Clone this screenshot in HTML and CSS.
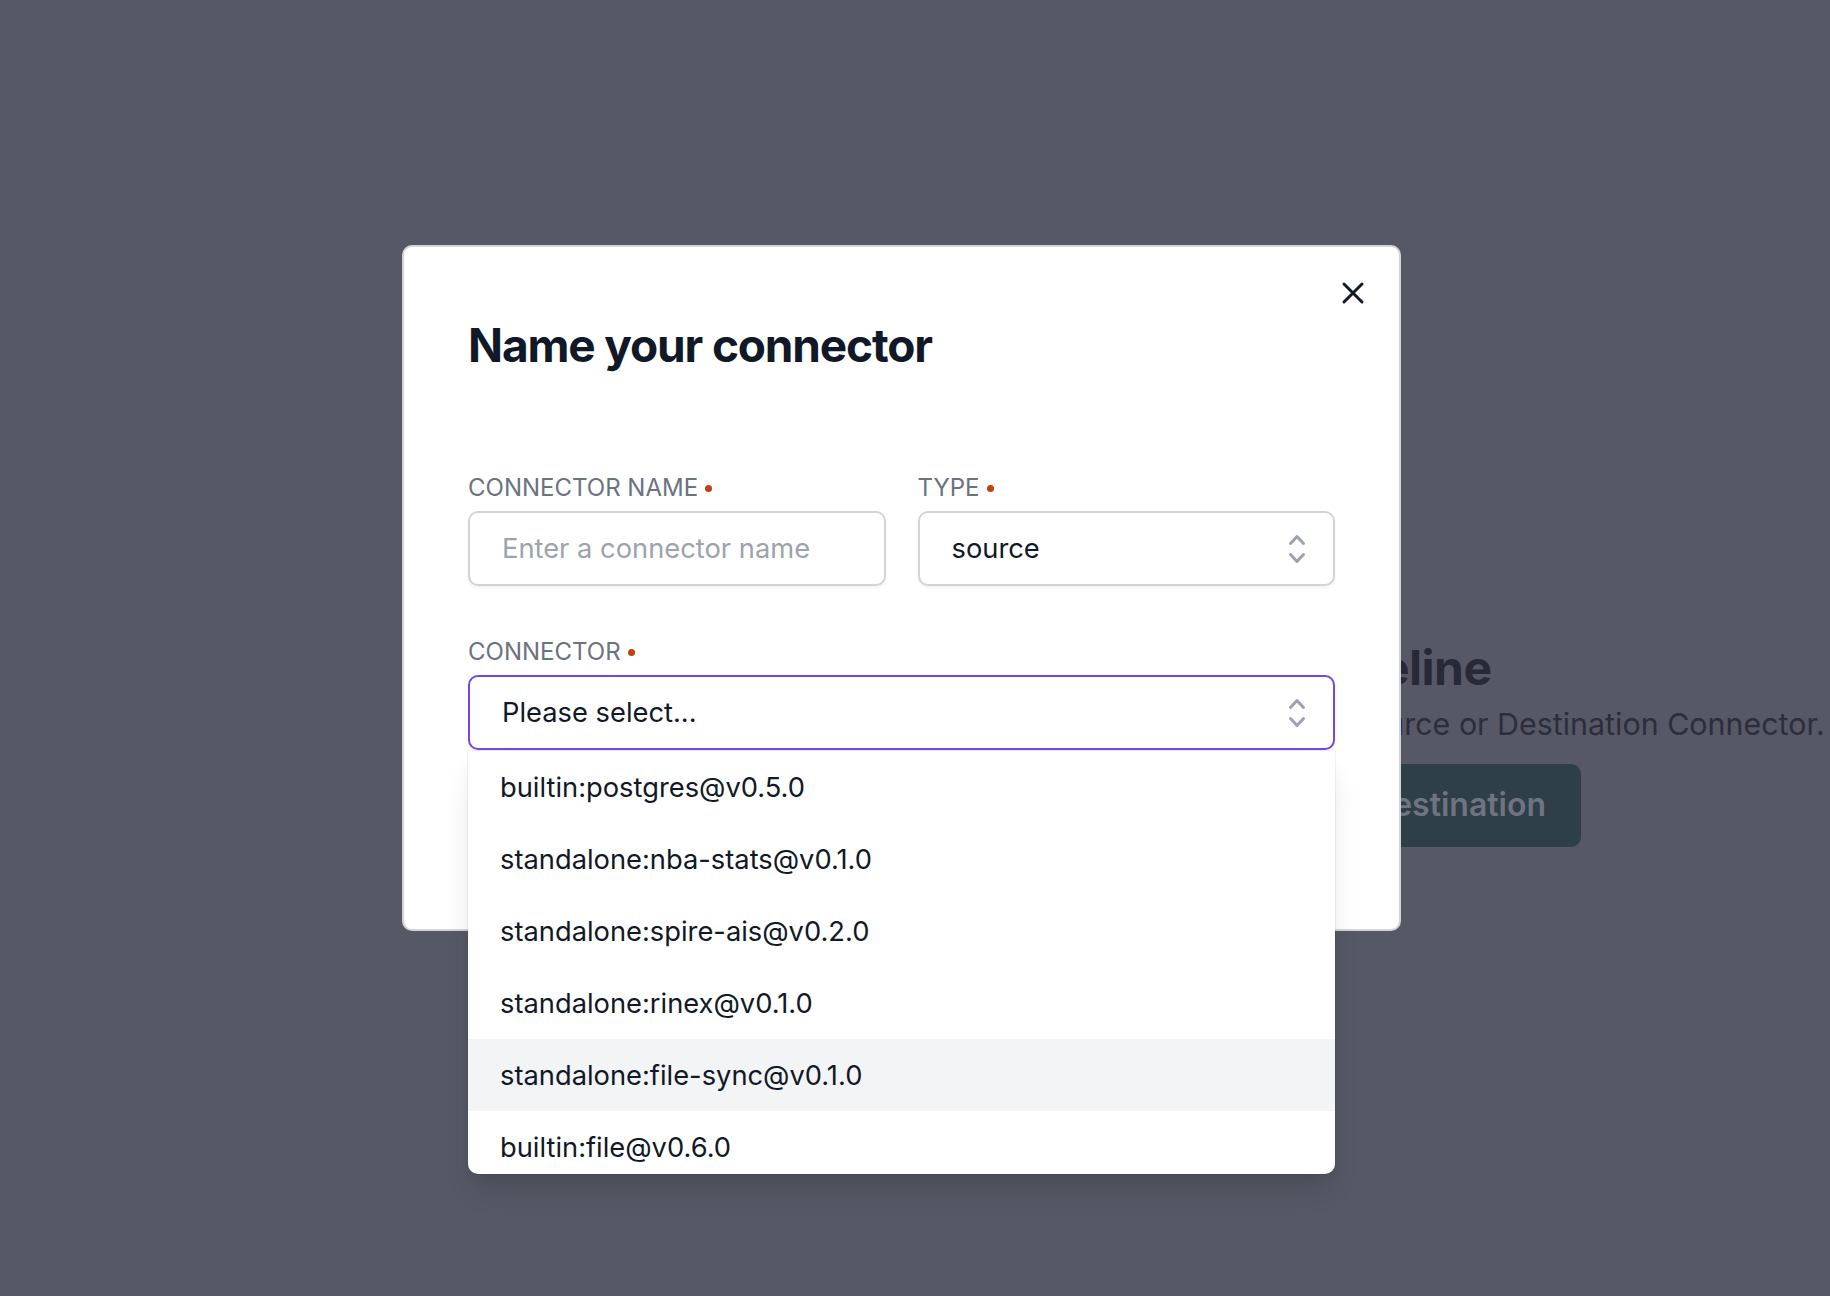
FILE: index.html
```html
<!DOCTYPE html>
<html lang="en">
<head>
<meta charset="utf-8">
<title>Name your connector</title>
<link rel="stylesheet" href="styles.css">
</head>
<body>
  <main class="page">
    <section class="empty">
      <h2 class="empty-title">Create a new pipeline</h2>
      <p class="empty-sub">Get started by making a Source or Destination Connector.</p>
      <div class="empty-actions">
        <button class="btn-dark" type="button">Add Source</button>
        <button class="btn-dark" type="button">Add Destination</button>
      </div>
    </section>
  </main>

  <div class="overlay">
    <div class="modal" role="dialog" aria-labelledby="modal-title">
      <button class="close" type="button" aria-label="Close">
        <svg viewBox="0 0 24 24" width="36" height="36" fill="none" stroke="#111827" stroke-width="2" stroke-linecap="round" stroke-linejoin="round"><path d="M6 18L18 6M6 6l12 12"/></svg>
      </button>
      <h1 class="title" id="modal-title">Name your connector</h1>

      <div class="form">
        <div class="row">
          <div class="field">
            <div class="label">Connector Name<span class="req"></span></div>
            <div class="input"><span class="placeholder">Enter a connector name</span></div>
          </div>
          <div class="field">
            <div class="label">Type<span class="req"></span></div>
            <div class="input select">
              <span>source</span>
              <svg class="chev" viewBox="0 0 20 20" width="40" height="40" fill="#9ca3af"><path fill-rule="evenodd" d="M10 3a.75.75 0 01.55.24l3.25 3.5a.75.75 0 11-1.1 1.02L10 4.852 7.3 7.76a.75.75 0 01-1.1-1.02l3.25-3.5A.75.75 0 0110 3zm-3.76 9.2a.75.75 0 011.06.04l2.7 2.908 2.7-2.908a.75.75 0 111.1 1.02l-3.25 3.5a.75.75 0 01-1.1 0l-3.25-3.5a.75.75 0 01.04-1.06z" clip-rule="evenodd"/></svg>
            </div>
          </div>
        </div>

        <div class="field combo">
          <div class="label">Connector<span class="req"></span></div>
          <div class="input select focus">
            <span>Please select...</span>
            <svg class="chev" viewBox="0 0 20 20" width="40" height="40" fill="#9ca3af"><path fill-rule="evenodd" d="M10 3a.75.75 0 01.55.24l3.25 3.5a.75.75 0 11-1.1 1.02L10 4.852 7.3 7.76a.75.75 0 01-1.1-1.02l3.25-3.5A.75.75 0 0110 3zm-3.76 9.2a.75.75 0 011.06.04l2.7 2.908 2.7-2.908a.75.75 0 111.1 1.02l-3.25 3.5a.75.75 0 01-1.1 0l-3.25-3.5a.75.75 0 01.04-1.06z" clip-rule="evenodd"/></svg>
          </div>
          <ul class="listbox" role="listbox">
            <li class="option">builtin:postgres@v0.5.0</li>
            <li class="option">standalone:nba-stats@v0.1.0</li>
            <li class="option">standalone:spire-ais@v0.2.0</li>
            <li class="option">standalone:rinex@v0.1.0</li>
            <li class="option active">standalone:file-sync@v0.1.0</li>
            <li class="option">builtin:file@v0.6.0</li>
          </ul>
        </div>
      </div>

      <div class="actions">
        <button class="btn btn-light" type="button">Cancel</button>
        <button class="btn btn-primary" type="button">Next</button>
      </div>
    </div>
  </div>
</body>
</html>
```

FILE: styles.css
```css
html, body {
  margin: 0;
  padding: 0;
}
body {
  width: 1830px;
  height: 1296px;
  overflow: hidden;
  background: #565865;
  font-family: Inter, "Noto Sans", "Liberation Sans", sans-serif;
  position: relative;
}

/* background page (under overlay) */
.page {
  padding: 636px 0 0 998px;
}
.empty-title {
  margin: 0;
  font-size: 48px;
  line-height: 64px;
  font-weight: 700;
  letter-spacing: -0.01em;
  color: #272936;
  white-space: nowrap;
}
.empty-sub {
  margin: 0;
  font-size: 30.4px;
  line-height: 48px;
  color: #2c2e3b;
  white-space: nowrap;
}
.empty-actions {
  margin-top: 16px;
  display: flex;
  gap: 16px;
}
.btn-dark {
  font-family: inherit;
  font-size: 32px;
  line-height: 48px;
  font-weight: 600;
  padding: 17px 35px 18px;
  border: none;
  border-radius: 10px;
  background: #2e3f48;
  color: #6f7480;
  white-space: nowrap;
}

/* overlay + modal */
.overlay {
  position: absolute;
  inset: 0;
}
.modal {
  position: absolute;
  left: 402px;
  top: 245px;
  width: 999px;
  box-sizing: border-box;
  background: #fff;
  border: 2px solid #d4d4d8;
  border-radius: 10px;
  padding: 64px;
}
.close {
  position: absolute;
  top: 28px;
  right: 28px;
  width: 36px;
  height: 36px;
  padding: 0;
  border: none;
  background: none;
  display: flex;
}
.title {
  margin: 0;
  font-size: 46px;
  line-height: 68px;
  font-weight: 700;
  letter-spacing: -0.025em;
  color: #111827;
}
.form {
  margin-top: 93px;
  display: flex;
  flex-direction: column;
  gap: 50px;
}
.row {
  display: grid;
  grid-template-columns: 1fr 1fr;
  gap: 32px;
}
.label {
  display: flex;
  align-items: center;
  font-size: 24px;
  line-height: 32px;
  color: #6b7280;
  text-transform: uppercase;
  margin-bottom: 7px;
}
.req {
  width: 7px;
  height: 7px;
  border-radius: 50%;
  background: #c2410c;
  margin-left: 7px;
}
.input {
  height: 75px;
  box-sizing: border-box;
  border: 2px solid #d1d5db;
  border-radius: 10px;
  padding: 0 32px;
  display: flex;
  align-items: center;
  font-size: 27.3px;
  color: #111827;
  background: #fff;
  box-shadow: 0 2px 3px rgba(0, 0, 0, 0.05);
}
.placeholder {
  color: #9ca3af;
}
.select {
  position: relative;
}
.select.focus {
  border-color: #7445e8;
}
.chev {
  position: absolute;
  right: 16px;
  top: 50%;
  transform: translateY(-50%);
}
.combo {
  position: relative;
}
.listbox {
  position: absolute;
  left: 0;
  right: 0;
  top: calc(100% + 1px);
  height: 423px;
  overflow: hidden;
  margin: 0;
  padding: 0;
  list-style: none;
  background: #fff;
  border-radius: 0 0 10px 10px;
  box-shadow: 0 20px 30px -6px rgba(0, 0, 0, 0.12), 0 8px 14px -6px rgba(0, 0, 0, 0.08), 0 0 0 1px rgba(0, 0, 0, 0.04);
  z-index: 5;
}
.option {
  height: 72px;
  display: flex;
  align-items: center;
  padding: 0 32px;
  font-size: 27.3px;
  color: #111827;
}
.option.active {
  background: #f3f4f6;
}

.actions {
  margin-top: 40px;
  display: flex;
  justify-content: flex-end;
  gap: 16px;
}
.btn {
  height: 75px;
  padding: 0 36px;
  font-family: inherit;
  font-size: 28px;
  font-weight: 600;
  border-radius: 10px;
  border: 2px solid #d1d5db;
  background: #fff;
  color: #111827;
}
.btn-primary {
  background: #1f2937;
  border-color: #1f2937;
  color: #fff;
}
```
